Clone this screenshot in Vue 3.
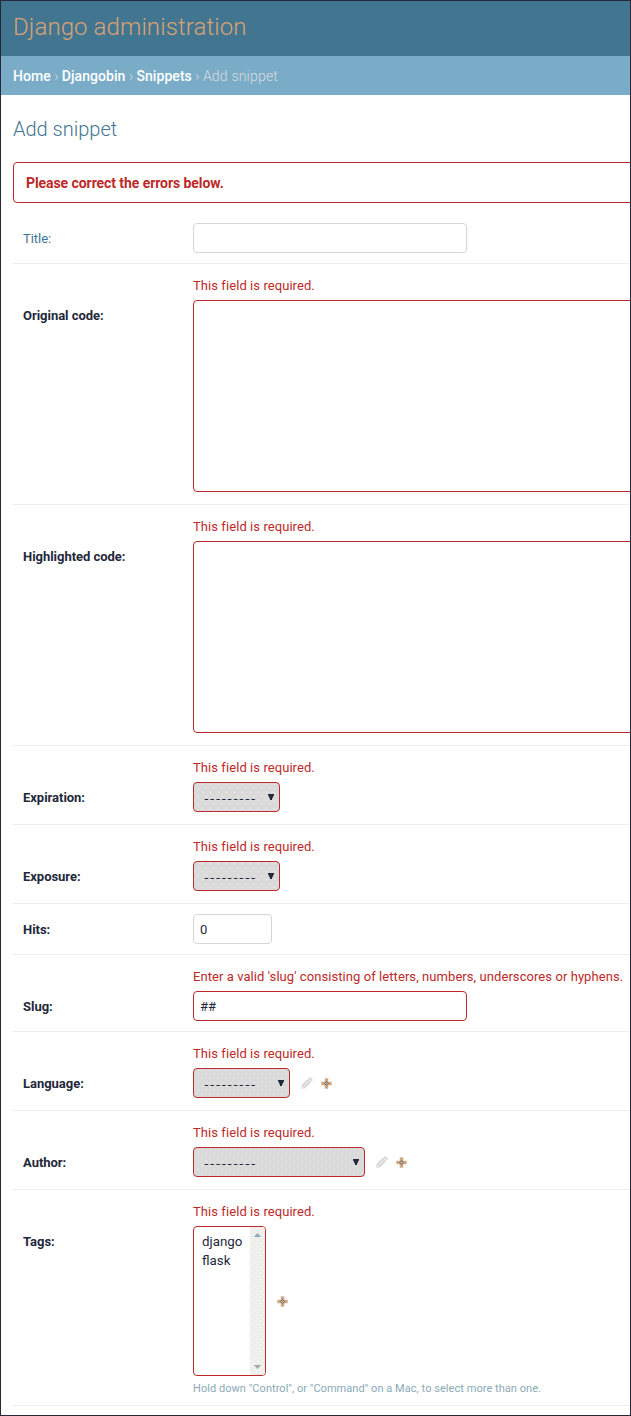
<script setup>
const required = 'This field is required.'
const rows = [
  { label: 'Title:', kind: 'text', width: 274, value: '', optional: true },
  { label: 'Original code:', kind: 'area', error: required },
  { label: 'Highlighted code:', kind: 'area', error: required },
  { label: 'Expiration:', kind: 'select', width: 87, error: required },
  { label: 'Exposure:', kind: 'select', width: 87, error: required },
  { label: 'Hits:', kind: 'text', width: 79, value: '0' },
  {
    label: 'Slug:',
    kind: 'text',
    width: 274,
    value: '##',
    error: "Enter a valid 'slug' consisting of letters, numbers, underscores or hyphens.",
  },
  { label: 'Language:', kind: 'select', width: 97, error: required, related: true },
  { label: 'Author:', kind: 'select', width: 172, error: required, related: true },
  {
    label: 'Tags:',
    kind: 'list',
    options: ['django', 'flask'],
    error: required,
    hint: 'Hold down "Control", or "Command" on a Mac, to select more than one.',
  },
]
</script>

<template>
  <div class="page">
    <header class="header">Django administration</header>
    <nav class="crumbs">
      <a>Home</a><span class="sep"> › </span><a>Djangobin</a><span class="sep"> › </span><a>Snippets</a><span class="sep"> › </span><span class="here">Add snippet</span>
    </nav>
    <main class="content">
      <h1>Add snippet</h1>
      <p class="errornote">Please correct the errors below.</p>
      <div v-for="row in rows" :key="row.label" class="row" :class="[row.kind, { invalid: row.error }]">
        <div v-if="row.error" class="error">{{ row.error }}</div>
        <label :class="{ optional: row.optional }">{{ row.label }}</label>
        <div class="field">
          <div v-if="row.kind === 'text'" class="control input" :style="{ width: row.width + 'px' }">{{ row.value }}</div>
          <div v-else-if="row.kind === 'area'" class="control textarea"></div>
          <div v-else-if="row.kind === 'select'" class="control dropdown" :style="{ width: row.width + 'px' }">
            <span class="blank">---------</span>
            <svg class="arrow" width="6" height="6" viewBox="0 0 6 6"><path d="M0 0H6V1L4 5V6H2V5L0 1Z" /></svg>
          </div>
          <div v-else class="control listbox">
            <div class="options">
              <div v-for="option in row.options" :key="option">{{ option }}</div>
            </div>
            <div class="scrollbar">
              <svg width="7" height="4" viewBox="0 0 7 4"><path fill="#79aec8" d="M0 4L3.5 0L7 4Z" /><path fill="#d4a276" d="M2 3L3.5 1L5 3Z" /></svg>
              <svg width="7" height="4" viewBox="0 0 7 4"><path fill="#79aec8" d="M0 0H7L3.5 4Z" /><path fill="#d4a276" d="M1 .5H6L3.5 3Z" /></svg>
            </div>
          </div>
          <svg v-if="row.related" class="pencil" width="12" height="12" viewBox="0 0 12 12">
            <path fill="#d9d9d9" d="M0.3 11.7L0.5 8L6.7 1.8L10.2 5.3L4 11.5L0.3 11.7ZM7.2 1.4L8.6 0.2Q9 0 9.5 0.2L11.7 2.5Q12 3 11.7 3.4L10.6 4.8Z" />
            <path stroke="#fff" stroke-width="0.6" d="M3 8.8L7.4 4.4" />
            <path fill="#fff" d="M1.5 9.3L2.7 10.5L1.5 10.7Z" />
          </svg>
          <svg v-if="row.related || row.kind === 'list'" class="plus" width="11" height="11" viewBox="0 0 11 11">
            <path fill="#d9a273" stroke="#ccb9aa" stroke-width="0.6" d="M4 .5H7V4H10.5V7H7V10.5H4V7H.5V4H4Z" />
            <path fill="#617b88" d="M5 3H6V4H5ZM3 5H4V6H3ZM7 5H8V6H7ZM5 7H6V8H5ZM4 4H5V5H4ZM6 4H7V5H6ZM4 6H5V7H4ZM6 6H7V7H6Z" />
          </svg>
        </div>
        <div v-if="row.hint" class="hint">{{ row.hint }}</div>
      </div>
    </main>
  </div>
</template>

<style scoped>
.page {
  box-sizing: border-box;
  width: 631px;
  height: 1416px;
  border: 1px solid #262738;
  overflow: hidden;
  background: #fff;
  color: #23283a;
  font-family: Roboto, sans-serif;
  font-size: 13px;
}
.header {
  height: 55px;
  padding-left: 12px;
  background: #427590;
  color: #d9a273;
  font-size: 24px;
  font-weight: 300;
  line-height: 52px;
  letter-spacing: 0.1px;
}
.crumbs {
  height: 39px;
  padding-left: 12px;
  background: #7aacc8;
  color: #dadada;
  font-size: 14px;
  font-weight: 300;
  line-height: 40px;
  white-space: pre;
}
.crumbs a {
  color: #fff;
  font-weight: 500;
  letter-spacing: 0.06px;
}
.here {
  letter-spacing: 0.2px;
}
.content {
  width: 700px;
  padding-left: 12px;
}
h1 {
  margin: 0;
  height: 67px;
  color: #427590;
  font-size: 20px;
  font-weight: 300;
  line-height: 69px;
}
.errornote {
  box-sizing: border-box;
  height: 41px;
  margin: 0 0 10px;
  padding-left: 12px;
  border: 1px solid #bd2929;
  border-radius: 4px;
  color: #bd2929;
  font-size: 14px;
  font-weight: 700;
  line-height: 40px;
  letter-spacing: -0.07px;
}
.row {
  display: grid;
  grid-template-columns: 170px 1fr;
  padding: 10px 0 10px 10px;
  border-bottom: 1px solid #eee;
}
.row.invalid {
  padding-top: 0;
}
.row.area,
.row.select {
  padding-bottom: 12px;
}
.row.list {
  padding-bottom: 9px;
}
.error {
  grid-column: 2;
  height: 36px;
  color: #bd2929;
  line-height: 44px;
  letter-spacing: 0.07px;
  white-space: nowrap;
}
label {
  grid-column: 1;
  height: 30px;
  font-weight: 700;
  line-height: 32px;
  letter-spacing: -0.03px;
}
label.optional {
  color: #427590;
  font-weight: 400;
}
.field {
  display: flex;
  align-items: center;
}
.control {
  box-sizing: border-box;
  border: 1px solid #d5d5d5;
  border-radius: 4px;
}
.invalid .control {
  border-color: #bd2929;
}
.input {
  height: 30px;
  padding-left: 6px;
  line-height: 29px;
}
.textarea {
  width: 610px;
  height: 192px;
}
.dropdown {
  display: flex;
  justify-content: space-between;
  height: 30px;
  padding: 0 5px 0 10px;
  background-color: #dadada;
  background-image: radial-gradient(circle at 1.5px 1.5px, #f2f2f2 0.5px, transparent 0.7px),
    radial-gradient(circle at 5.5px 5.5px, #f2f2f2 0.5px, transparent 0.7px);
  background-size: 8px 8px;
  background-position: 3px 4px;
}
.blank {
  font-family: "DejaVu Sans", sans-serif;
  line-height: 32px;
  letter-spacing: 1.15px;
}
.arrow {
  margin-top: 11px;
  fill: #23283a;
}
.pencil {
  margin-left: 11px;
}
.plus {
  margin-left: 8px;
}
.list .plus {
  margin-left: 11px;
}
.listbox {
  display: flex;
  justify-content: space-between;
  width: 73px;
  height: 150px;
  overflow: hidden;
}
.options {
  padding: 5px 0 0 8px;
  font-size: 13.3px;
  line-height: 19px;
}
.scrollbar {
  display: flex;
  flex-direction: column;
  align-items: center;
  justify-content: space-between;
  box-sizing: border-box;
  width: 15px;
  padding: 6px 0;
  background-color: #edefed;
  background-image: radial-gradient(circle at 1.5px 1.5px, #fff 0.6px, transparent 0.8px),
    radial-gradient(circle at 4.5px 4.5px, #fff 0.6px, transparent 0.8px);
  background-size: 6px 6px;
}
.hint {
  grid-column: 2;
  height: 20px;
  color: #8aa9b8;
  font-size: 11px;
  line-height: 26px;
  letter-spacing: 0.05px;
}
</style>

<style>
body {
  margin: 0;
}
</style>
